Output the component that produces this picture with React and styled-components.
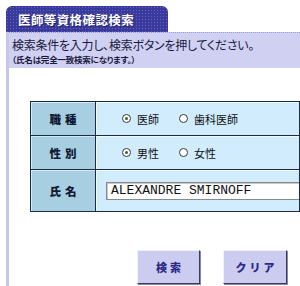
import styled, { createGlobalStyle } from "styled-components";

const GlobalStyle = createGlobalStyle`
	html, body {
		margin: 0;
		padding: 0;
		background: #fff;
		overflow: hidden;
	}
	body {
		font-family: "Noto Sans CJK JP", "Noto Sans", sans-serif;
		font-feature-settings: "palt";
	}
`;

const Page = styled.div`
	padding: 6px 0 0 6px;
	width: 294px;
	height: 280px;
`;

const Tab = styled.div`
	width: 162px;
	height: 26px;
	box-sizing: border-box;
	padding-left: 12px;
	display: flex;
	align-items: center;
	border-radius: 6px 6px 0 0;
	background-color: #3a3a9c;
	background-image: radial-gradient(#6464c0 0.8px, transparent 1px);
	background-size: 3px 3px;
	color: #fff;
	font-size: 12.5px;
	font-weight: bold;
	letter-spacing: 0.4px;
	text-shadow: 1px 1px 0 #22226a;
`;

const Body = styled.div`
	border-left: 3px solid #c6c6ea;
	height: 254px;
`;

const Band = styled.div`
	height: 36px;
	box-sizing: border-box;
	padding: 2px 0 0 3px;
	background: #d0d0f2;
	border-top: 1px dotted #9a9acc;
	color: #1a1a40;
`;

const Lead = styled.div`
	font-size: 12px;
	line-height: 19px;
	letter-spacing: -0.25px;
`;

const Note = styled.div`
	font-size: 8.5px;
	line-height: 11px;
	font-weight: bold;
	letter-spacing: -0.2px;
`;

const Main = styled.div`
	padding: 33px 0 0 21px;
`;

const Table = styled.table`
	border-collapse: collapse;
	width: 270px;
	border-top: 1px solid #1c2a44;
`;

const Head = styled.th`
	width: 65px;
	height: ${(p) => p.h}px;
	padding: 0;
	box-sizing: border-box;
	background: #a8cee2;
	border: 1px solid #1c2a44;
	box-shadow: inset 1px 1px 0 #d4eaf4;
	color: #111a33;
	font-size: 11.5px;
	font-weight: 900;
	letter-spacing: 4px;
	text-indent: 4px;
`;

const Cell = styled.td`
	padding: 0 0 0 10px;
	height: ${(p) => p.h}px;
	box-sizing: border-box;
	background: #d0ecfd;
	border: 1px solid #1c2a44;
	box-shadow: inset 1px 1px 0 #f0faff;
`;

const Options = styled.div`
	display: flex;
	align-items: center;
	padding-left: 16px;
	font-size: 11px;
	color: #111;
	white-space: nowrap;
`;

const Option = styled.label`
	display: flex;
	align-items: center;
	gap: 6px;
	min-width: 57px;
`;

const Radio = styled.span`
	width: 7px;
	height: 7px;
	border: 1px solid #3a3a3a;
	border-radius: 50%;
	background: #fff;
	display: flex;
	align-items: center;
	justify-content: center;
	&::after {
		content: "";
		width: 3px;
		height: 3px;
		border-radius: 50%;
		background: ${(p) => (p.checked ? "#2c6a2c" : "transparent")};
	}
`;

const NameInput = styled.div`
	height: 18px;
	box-sizing: border-box;
	background: #fff;
	border: 1px solid #8a8a8a;
	border-right: none;
	box-shadow: inset 1px 1px 0 #c8c8c8;
	padding-left: 4px;
	font-family: "Liberation Mono", monospace;
	font-size: 13px;
	line-height: 16px;
	color: #111;
	white-space: nowrap;
`;

const Buttons = styled.div`
	display: flex;
	gap: 23px;
	padding: 38px 0 0 107px;
`;

const Button = styled.button`
	width: ${(p) => p.w}px;
	height: 34px;
	padding: 0;
	background: #ccccf0;
	border: 1px solid;
	border-color: #f0f0ff #3a3a5a #3a3a5a #f0f0ff;
	box-shadow: 1px 1px 0 #8888a8;
	color: #2a2a88;
	font-family: "Noto Sans CJK JP", sans-serif;
	font-size: 11px;
	font-weight: 900;
	letter-spacing: 3px;
	text-indent: 3px;
`;

const App = () => {
	return (
		<Page>
			<GlobalStyle />
			<Tab>医師等資格確認検索</Tab>
			<Body>
				<Band>
					<Lead>検索条件を入力し、検索ボタンを押してください。</Lead>
					<Note>（氏名は完全一致検索になります。）</Note>
				</Band>
				<Main>
					<Table>
						<tbody>
							<tr>
								<Head h={34}>職種</Head>
								<Cell h={34}>
									<Options>
										<Option>
											<Radio checked />
											医師
										</Option>
										<Option>
											<Radio />
											歯科医師
										</Option>
									</Options>
								</Cell>
							</tr>
							<tr>
								<Head h={34}>性別</Head>
								<Cell h={34}>
									<Options>
										<Option>
											<Radio checked />
											男性
										</Option>
										<Option>
											<Radio />
											女性
										</Option>
									</Options>
								</Cell>
							</tr>
							<tr>
								<Head h={42}>氏名</Head>
								<Cell h={42}>
									<NameInput>ALEXANDRE SMIRNOFF</NameInput>
								</Cell>
							</tr>
						</tbody>
					</Table>
					<Buttons>
						<Button w={63}>検索</Button>
						<Button w={64}>クリア</Button>
					</Buttons>
				</Main>
			</Body>
		</Page>
	);
};

export default App;
